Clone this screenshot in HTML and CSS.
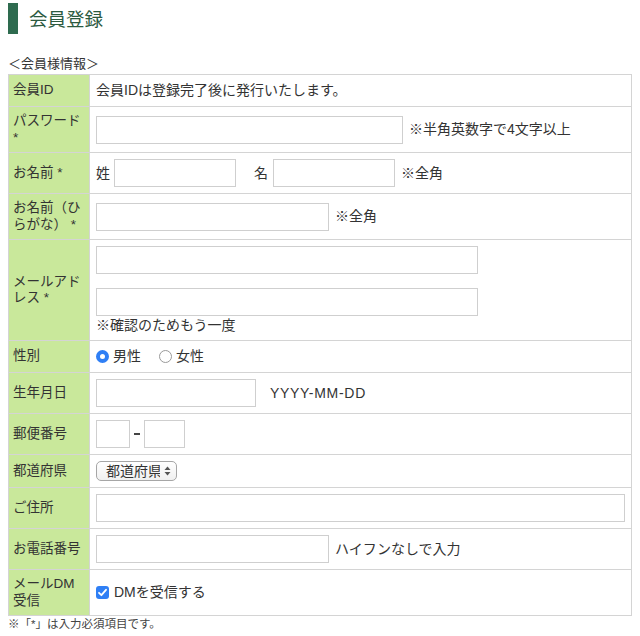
FILE: index.html
```html
<!DOCTYPE html>
<html lang="ja">
<head>
  <meta charset="UTF-8" />
  <meta name="viewport" content="width=device-width, initial-scale=1.0"/>
  <title>会員登録</title>
  <link rel="stylesheet" href="styles.css">
</head>
<body>
  <h1 class="page-title">会員登録</h1>

  <p class="section-caption">＜会員様情報＞</p>

  <form class="entry-form">
    <table class="form-table">
      <tr>
        <th>会員ID</th>
        <td>会員IDは登録完了後に発行いたします。</td>
      </tr>
      <tr>
        <th>パスワード<br>*</th>
        <td>
          <div class="field">
            <input type="password" class="txt w-password">
            <span class="note">※半角英数字で4文字以上</span>
          </div>
        </td>
      </tr>
      <tr>
        <th>お名前 *</th>
        <td>
          <div class="field">
            <span class="sub-label">姓</span>
            <input type="text" class="txt w-name">
            <span class="sub-label gap">名</span>
            <input type="text" class="txt w-name">
            <span class="note">※全角</span>
          </div>
        </td>
      </tr>
      <tr>
        <th>お名前（ひらがな） *</th>
        <td>
          <div class="field">
            <input type="text" class="txt w-kana">
            <span class="note">※全角</span>
          </div>
        </td>
      </tr>
      <tr>
        <th>メールアドレス *</th>
        <td class="mail-cell">
          <div class="field mail-first">
            <input type="email" class="txt w-mail">
          </div>
          <div class="field">
            <input type="email" class="txt w-mail">
          </div>
          <div class="mail-note">※確認のためもう一度</div>
        </td>
      </tr>
      <tr>
        <th>性別</th>
        <td>
          <div class="field line">
            <label class="choice"><input type="radio" name="sex" checked>男性</label>
            <label class="choice"><input type="radio" name="sex">女性</label>
          </div>
        </td>
      </tr>
      <tr>
        <th>生年月日</th>
        <td>
          <div class="field">
            <input type="text" class="txt w-birth">
            <span class="hint">YYYY-MM-DD</span>
          </div>
        </td>
      </tr>
      <tr>
        <th>郵便番号</th>
        <td>
          <div class="field zip">
            <input type="text" class="txt w-zip1">
            <span class="dash"></span>
            <input type="text" class="txt w-zip2">
          </div>
        </td>
      </tr>
      <tr>
        <th>都道府県</th>
        <td>
          <div class="field">
            <span class="select-wrap">
              <select class="pref">
                <option>都道府県</option>
              </select>
              <svg class="select-arrow" width="7" height="10" viewBox="0 0 7 10">
                <path d="M3.5 0.5 L6.5 4 L0.5 4 Z" fill="#555"/>
                <path d="M3.5 9.5 L6.5 6 L0.5 6 Z" fill="#555"/>
              </svg>
            </span>
          </div>
        </td>
      </tr>
      <tr>
        <th>ご住所</th>
        <td>
          <div class="field">
            <input type="text" class="txt w-full">
          </div>
        </td>
      </tr>
      <tr>
        <th>お電話番号</th>
        <td>
          <div class="field">
            <input type="tel" class="txt w-kana">
            <span class="note">ハイフンなしで入力</span>
          </div>
        </td>
      </tr>
      <tr>
        <th>メールDM<br>受信</th>
        <td>
          <div class="field line">
            <label class="choice">
              <svg class="check" width="13" height="13" viewBox="0 0 13 13">
                <rect x="0" y="0" width="13" height="13" rx="3" fill="#2f7ff5"/>
                <path d="M3 6.8 L5.4 9.2 L10 3.8" fill="none" stroke="#fff" stroke-width="1.8" stroke-linecap="round" stroke-linejoin="round"/>
              </svg>DMを受信する
            </label>
          </div>
        </td>
      </tr>
    </table>
  </form>

  <p class="footnote">※「*」は入力必須項目です。</p>
</body>
</html>
```

FILE: styles.css
```css
body, html {
  padding: 0;
  background-color: #fff;
  color: #333;
  font-family: "Liberation Sans", "Noto Sans CJK JP", sans-serif;
  font-size: 13px;
}
body {
  margin: 3px 8px 8px;
}
.page-title {
  margin: 0;
  height: 31px;
  line-height: 31px;
  padding-left: 11px;
  border-left: 10px solid #2e6b4f;
  font-family: "Noto Sans CJK JP", sans-serif;
  font-size: 18.5px;
  font-weight: normal;
  color: #2b5a3f;
}
.section-caption {
  margin: 20px 0 0;
  line-height: 20px;
  font-size: 13px;
}
.entry-form {
  margin: 0;
}
.form-table {
  width: 100%;
  border-collapse: collapse;
  border: 1px solid #ccc;
}
.form-table th,
.form-table td {
  border: 1px solid #d4d4d4;
  padding: 6px;
  vertical-align: middle;
}
.form-table th {
  width: 71px;
  padding: 6px 6px 6px 4px;
  background-color: #c9e89b;
  text-align: left;
  font-size: 13.5px;
  font-weight: normal;
  line-height: 16.5px;
}
.form-table td {
  font-size: 14px;
  line-height: 19px;
}
.field {
  display: flex;
  align-items: center;
}
.field.line {
  height: 19px;
}
.txt {
  box-sizing: border-box;
  height: 28px;
  margin: 0;
  padding: 2px 4px;
  border: 1px solid #cfcfcf;
  border-radius: 0;
  background: #fff;
  font: inherit;
}
.w-password { width: 307px; }
.w-name { width: 122px; }
.w-kana { width: 233px; }
.w-mail { width: 382px; }
.w-birth { width: 160px; }
.w-zip1 { width: 34px; }
.w-zip2 { width: 41px; }
.w-full { width: 529px; }
.note {
  margin-left: 6px;
}
.sub-label {
  margin-right: 4px;
}
.sub-label.gap {
  margin-left: 18px;
  margin-right: 5px;
}
.hint {
  margin-left: 14px;
  letter-spacing: 0.7px;
}
.dash {
  width: 6px;
  height: 1.5px;
  margin: 0 4px;
  background: #444;
}
.mail-cell {
  padding-top: 6px;
}
.mail-first {
  margin-bottom: 14px;
}
.mail-note {
  line-height: 18px;
}
.choice {
  display: inline-flex;
  align-items: center;
  margin-right: 18px;
}
.choice input[type="radio"] {
  appearance: none;
  -webkit-appearance: none;
  box-sizing: border-box;
  width: 13px;
  height: 13px;
  margin: 0 4px 0 0;
  border: 1px solid #9a9a9a;
  border-radius: 50%;
  background: #fff;
}
.choice input[type="radio"]:checked {
  border: 4px solid #2f7ff5;
}
.check {
  margin-right: 5px;
}
.select-wrap {
  position: relative;
  display: inline-block;
  height: 20px;
}
.pref {
  appearance: none;
  -webkit-appearance: none;
  box-sizing: border-box;
  height: 20px;
  width: 81px;
  margin: 0;
  padding: 0 16px 0 9px;
  border: 1px solid #a6a6a6;
  border-radius: 5px;
  background: linear-gradient(#fff, #f0f0f0);
  color: #333;
  font: inherit;
  font-size: 14px;
  line-height: 18px;
}
.select-arrow {
  position: absolute;
  right: 6px;
  top: 5px;
  pointer-events: none;
}
.footnote {
  margin: 0;
  font-size: 11.5px;
  line-height: 16px;
  color: #444;
}
```
